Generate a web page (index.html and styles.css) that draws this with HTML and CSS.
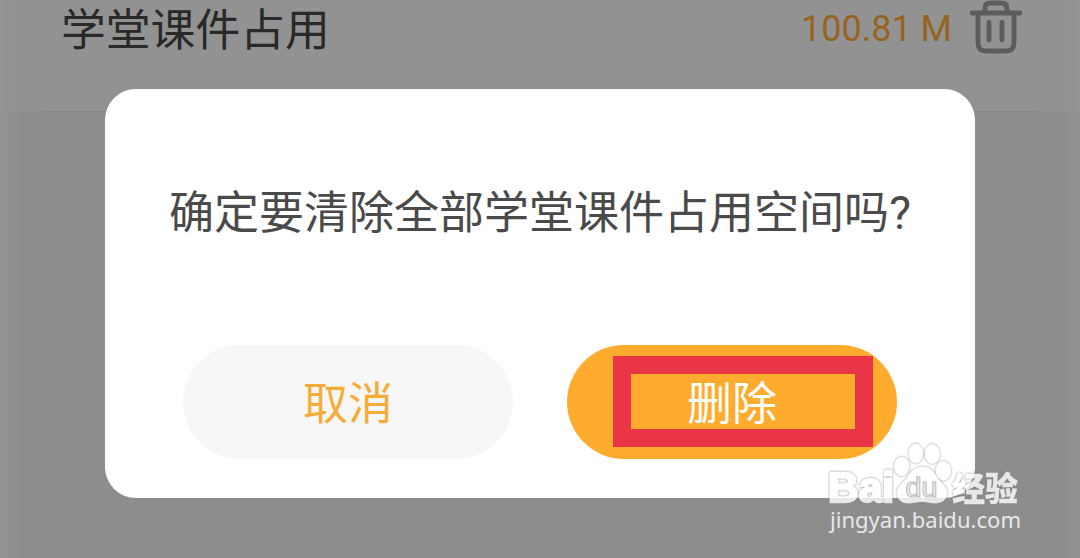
FILE: index.html
```html
<!DOCTYPE html>
<html lang="zh-CN">
<head>
    <meta charset="UTF-8">
    <meta name="viewport" content="width=device-width, initial-scale=1.0">
    <title>清除课件</title>
    <link rel="stylesheet" href="styles.css">
</head>
<body>

    <!-- Settings row -->
    <div class="row">
        <span class="row-title">学堂课件占用</span>
        <span class="row-size">100.81 M</span>
        <svg class="trash" width="54" height="58" viewBox="0 0 54 58" fill="none" stroke="#5c5c5c" stroke-width="4.8" stroke-linecap="round" stroke-linejoin="round">
            <path d="M3 13H51"/>
            <path d="M16 12V9Q16 3 22 3H32Q38 3 38 9V12"/>
            <path d="M9 14V43Q9 51 17 51H37Q45 51 45 43V14"/>
            <path d="M20 22.5V40M33 22.5V40"/>
        </svg>
    </div>

    <!-- Confirm dialog -->
    <div class="overlay">
        <div class="dialog">
            <p class="message">确定要清除全部学堂课件占用空间吗<span class="mark">?</span></p>
            <div class="actions">
                <button class="btn btn-cancel">取消</button>
                <button class="btn btn-delete">删除<span class="highlight"></span></button>
            </div>
        </div>
    </div>

    <!-- Watermark -->
    <div class="watermark">
        <svg width="210" height="110" viewBox="0 0 210 110">
            <g class="wm-logo">
                <text x="2" y="61.5" class="wm-bai" textLength="66" lengthAdjust="spacingAndGlyphs">Bai</text>
                <ellipse cx="75.7" cy="26.4" rx="7.2" ry="9.3"/>
                <ellipse cx="89.7" cy="13.4" rx="6.8" ry="9.6"/>
                <ellipse cx="106.3" cy="14" rx="7.2" ry="9.4"/>
                <ellipse cx="117.3" cy="30.7" rx="7.4" ry="9.2"/>
                <path d="M96 27C102 27 107 30 110 36C114 43 121 46 121 53C121 60 115 63 109 63C104 63 101 61.5 96 61.5C91 61.5 88 63 82 63C75 63 71 59 71.5 52C72 45 79 42 82 37C85 31 90 27 96 27Z"/>
                <text x="79.5" y="57" class="wm-du" textLength="32" lengthAdjust="spacingAndGlyphs">du</text>
                <text x="126" y="60.5" class="wm-cn" textLength="66" lengthAdjust="spacingAndGlyphs">经验</text>
            </g>
            <text x="4" y="87.5" class="wm-url" textLength="191" lengthAdjust="spacingAndGlyphs">jingyan.baidu.com</text>
        </svg>
    </div>

</body>
</html>
```

FILE: styles.css
```css
* {
    margin: 0;
    padding: 0;
    box-sizing: border-box;
}

body {
    font-family: Roboto, "Noto Sans CJK SC", sans-serif;
    background: linear-gradient(90deg, #949494 0, #8d8d8d 20px, #8d8d8d 1062px, #929292 1080px);
    height: 558px;
    overflow: hidden;
}

/* Settings row */
.row {
    display: flex;
    align-items: flex-start;
    height: 112px;
    padding: 0 57px 0 61px;
    background: linear-gradient(#868686, #868686) 42px 111px / 996px 1px no-repeat, linear-gradient(90deg, #959595 0, #929292 20px, #929292 1062px, #959595 1080px);
}

.row-title {
    font-family: "Noto Sans CJK SC", sans-serif;
    font-size: 44.8px;
    line-height: 54px;
    color: #292929;
}

.row-size {
    margin-left: auto;
    font-size: 36px;
    line-height: 59px;
    color: #966421;
}

.trash {
    flex: none;
    margin-left: 17px;
}

/* Dialog */
.overlay {
    position: absolute;
    inset: 0;
    display: flex;
    justify-content: center;
    align-items: flex-start;
    padding-top: 89px;
}

.dialog {
    width: 870px;
    height: 409px;
    padding: 90px 78px 39px;
    border-radius: 31px;
    background: #fff;
    display: flex;
    flex-direction: column;
    justify-content: space-between;
}

.message {
    margin: 0 -20px;
    font-family: "Noto Sans CJK SC", sans-serif;
    font-size: 45px;
    line-height: 62px;
    text-align: center;
    white-space: nowrap;
    color: #4a4a4a;
}

.mark {
    font-family: Roboto, sans-serif;
    font-size: 46px;
}

.actions {
    display: flex;
    justify-content: space-between;
}

.btn {
    position: relative;
    width: 330px;
    height: 114px;
    padding-bottom: 3px;
    border: none;
    border-radius: 57px;
    font-family: "Noto Sans CJK SC", sans-serif;
    font-size: 45px;
}

.btn-cancel {
    background: #f7f7f7;
    color: #f6ac38;
}

.btn-delete {
    background: #ffab2d;
    color: #fff;
}

.highlight {
    position: absolute;
    left: 46px;
    top: 11px;
    width: 260px;
    height: 91px;
    border: 18px solid #e93546;
}

/* Watermark */
.watermark {
    position: absolute;
    left: 826px;
    top: 440px;
}

.wm-logo {
    fill: #fff;
    stroke: #fff;
    stroke-width: 1;
    opacity: 0.8;
    filter: drop-shadow(0 0 1px #777);
}

.wm-bai {
    font: bold 42px "Liberation Sans", sans-serif;
    stroke-width: 2.5;
}

.wm-du {
    font: 27px "Liberation Sans", sans-serif;
    stroke: #bbb;
    stroke-width: 1.6;
}

.wm-cn {
    font: 900 33px "Noto Sans CJK SC", sans-serif;
    stroke-width: 0.3;
}

.wm-url {
    font: 22px "Noto Sans", sans-serif;
    fill: #e8e8e8;
}
```
